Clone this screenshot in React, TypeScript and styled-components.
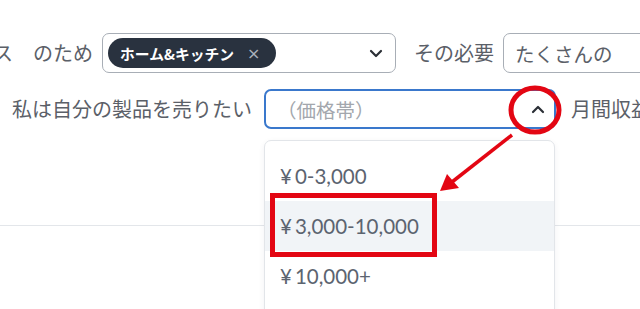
import React from "react";
import styled, { createGlobalStyle } from "styled-components";

const Global = createGlobalStyle`
  html, body { margin: 0; padding: 0; background: #fff; }
  body { font-family: "Noto Sans CJK JP", "Noto Sans", sans-serif; }
`;

const Page = styled.div`
  position: relative;
  width: 640px;
  height: 309px;
  overflow: hidden;
  background: #fff;
`;

const Row = styled.div<{ $top: number; $left: number }>`
  display: flex;
  align-items: center;
  margin-top: ${(p) => p.$top}px;
  margin-left: ${(p) => p.$left}px;
  white-space: nowrap;
`;

const Label = styled.span<{ $ml?: number; $mr?: number }>`
  font-size: 20px;
  color: #5b6068;
  line-height: 1;
  margin-left: ${(p) => p.$ml ?? 0}px;
  margin-right: ${(p) => p.$mr ?? 0}px;
  flex-shrink: 0;
`;

const SelectBox = styled.div<{ $w: number; $focus?: boolean }>`
  position: relative;
  box-sizing: border-box;
  width: ${(p) => p.$w}px;
  height: 40px;
  flex-shrink: 0;
  display: flex;
  align-items: center;
  padding: 0 12px 0 5px;
  border: ${(p) => (p.$focus ? "2px solid #3a78cc" : "1px solid #a8aeb6")};
  border-radius: 7px;
  background: #fff;
`;

const Pill = styled.span`
  display: inline-flex;
  align-items: center;
  height: 30px;
  padding: 0 15px 0 12px;
  border-radius: 15px;
  background: #29323f;
  color: #fff;
  font-weight: 700;
  font-size: 14.8px;
  gap: 13px;
`;

const PillX = styled.span`
  color: #aab1bb;
  font-family: "DejaVu Sans", sans-serif;
  font-weight: 400;
  font-size: 16px;
`;

const Chevron = styled.svg`
  margin-left: auto;
  flex-shrink: 0;
`;

const Placeholder = styled.span`
  color: #a3a7ad;
  font-size: 19.5px;
  margin-left: 6px;
`;

const Value = styled.span`
  color: #5b6068;
  font-size: 19.5px;
  margin-left: 6px;
`;

const Divider = styled.div`
  margin-top: 96px;
  height: 1px;
  background: #e3e6ea;
`;

const Dropdown = styled.div`
  position: absolute;
  left: -2px;
  top: 49px;
  width: 291px;
  height: 220px;
  box-sizing: border-box;
  padding-top: 10px;
  background: #fff;
  border: 1px solid #e2e5e9;
  border-radius: 7px;
  box-shadow: 0 2px 6px rgba(30, 40, 60, 0.06);
  z-index: 2;
`;

const Option = styled.div<{ $active?: boolean }>`
  height: 50px;
  display: flex;
  align-items: center;
  padding-left: 15px;
  background: ${(p) => (p.$active ? "#f1f4f7" : "transparent")};
  font-family: Lato, "Noto Sans", sans-serif;
  font-size: 20.5px;
  color: #5c6470;
`;

const Yen = styled.span`
  margin-right: 3px;
`;

const Overlay = styled.svg`
  position: absolute;
  left: 0;
  top: 0;
  pointer-events: none;
  z-index: 5;
`;

const options = ["0-3,000", "3,000-10,000", "10,000+"];

export default function App() {
  return (
    <Page>
      <Global />
      <Row $top={33} $left={-7}>
        <Label $mr={20}>ス</Label>
        <Label $mr={9}>のため</Label>
        <SelectBox $w={294}>
          <Pill>
            ホーム&amp;キッチン<PillX>×</PillX>
          </Pill>
          <Chevron width="14" height="9" viewBox="0 0 14 9">
            <path d="M2 2l5 5 5-5" fill="none" stroke="#2b2f36" strokeWidth="2.2" strokeLinecap="round" strokeLinejoin="round" />
          </Chevron>
        </SelectBox>
        <Label $ml={18} $mr={9}>その必要</Label>
        <SelectBox $w={200}>
          <Value>たくさんの</Value>
        </SelectBox>
      </Row>
      <Row $top={16} $left={12}>
        <Label $mr={12}>私は自分の製品を売りたい</Label>
        <SelectBox $w={292} $focus>
          <Placeholder>（価格帯）</Placeholder>
          <Chevron width="14" height="9" viewBox="0 0 14 9" style={{ marginRight: -3 }}>
            <path d="M2 7l5-5 5 5" fill="none" stroke="#2b2f36" strokeWidth="2.2" strokeLinecap="round" strokeLinejoin="round" />
          </Chevron>
          <Dropdown>
            {options.map((o, i) => (
              <Option key={o} $active={i === 1}>
                <Yen>¥</Yen>
                {o}
              </Option>
            ))}
          </Dropdown>
        </SelectBox>
        <Label $ml={15}>月間収益</Label>
      </Row>
      <Divider />
      <Overlay width="640" height="309" viewBox="0 0 640 309">
        <ellipse cx="535" cy="110" rx="24" ry="22" fill="none" stroke="#e30613" strokeWidth="5" />
        <line x1="512" y1="135" x2="452" y2="182" stroke="#e30613" strokeWidth="3.5" />
        <polygon points="440,191 447,174 459,188" fill="#e30613" />
        <rect x="272.5" y="195.5" width="162" height="59" fill="none" stroke="#e30613" strokeWidth="5" />
      </Overlay>
    </Page>
  );
}
